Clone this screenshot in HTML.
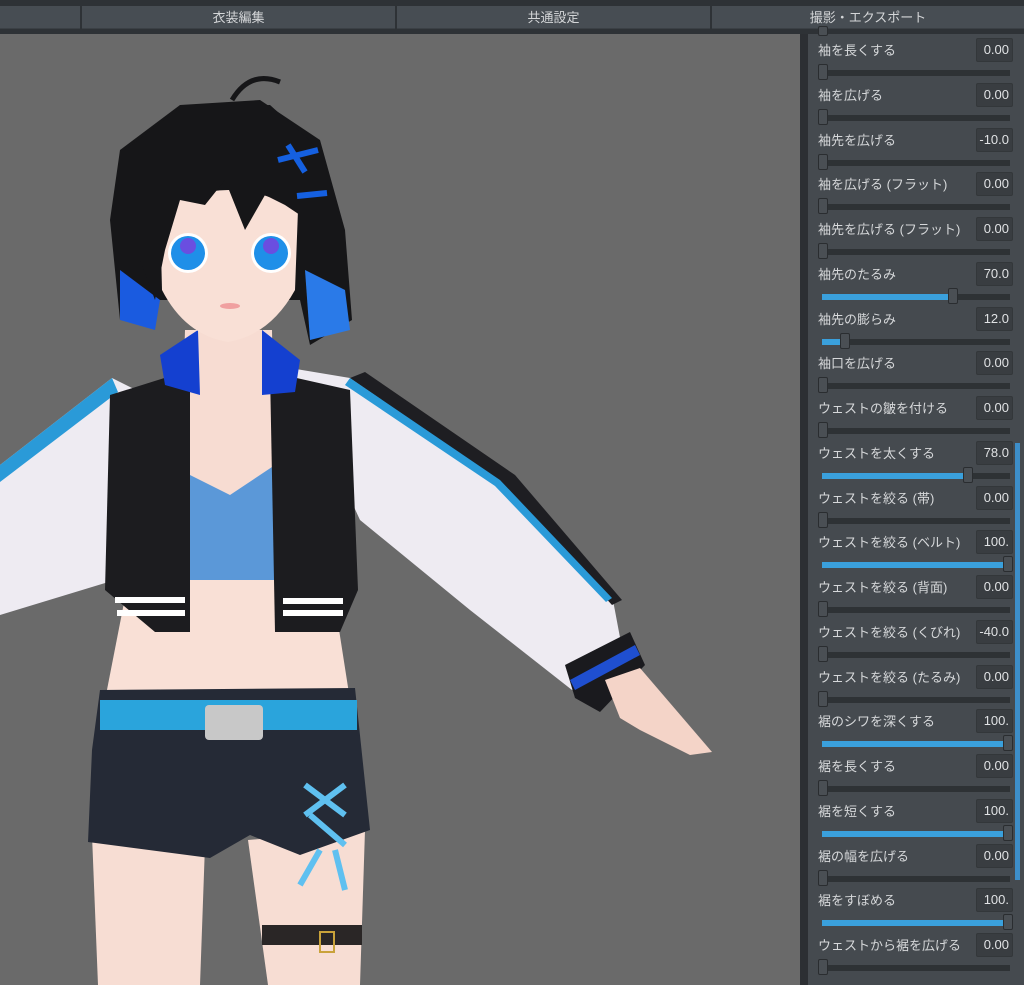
<!DOCTYPE html>
<html><head><meta charset="utf-8"><style>
*{margin:0;padding:0;box-sizing:border-box}
body{width:1024px;height:985px;overflow:hidden;background:#6a6a6a;font-family:"Liberation Sans","Noto Sans CJK JP",sans-serif;position:relative}
#top{position:absolute;left:0;top:0;width:1024px;height:34px;background:#2e3236}
.tab{position:absolute;top:6px;height:23px;background:#474d53;color:#d4d6d8;font-size:13px;line-height:23px;text-align:center;border-bottom:1px solid #3b4045}
#panel{position:absolute;left:800px;top:34px;width:224px;height:951px;background:#454a4f;border-left:8px solid #2c2f33}
.row{position:absolute;left:0;width:224px;height:44px}
.lb{position:absolute;left:818px;top:1px;height:24px;line-height:24px;font-size:13px;color:#d6d8da;white-space:nowrap}
.vb{position:absolute;left:976px;top:0;width:37px;height:24px;background:#393d41;border:1px solid #33373a;border-radius:2px;color:#e0e2e4;font-size:13px;line-height:22px;text-align:right;padding-right:3px}
.tr{position:absolute;left:822px;top:32px;width:188px;height:6px;background:#2e3235}
.fl{position:absolute;left:822px;top:32px;height:6px;background:#3aa0dc}
.hd{position:absolute;top:26px;width:10px;height:16px;background:#4a4f54;border:1px solid #2a2d30;border-radius:2px}
#sb{position:absolute;left:1015px;top:443px;width:5px;height:437px;background:#3d8ec9}
</style></head><body>
<svg width="800" height="985" style="position:absolute;left:0;top:0">
<polygon points="92,835 205,845 200,985 98,985" fill="#f7ddd3"/>
<polygon points="248,840 365,830 360,985 268,985" fill="#f7ddd3"/>
<rect x="262" y="925" width="100" height="20" fill="#2a2626"/>
<rect x="320" y="932" width="14" height="20" fill="none" stroke="#c9a23a" stroke-width="2"/>
<polygon points="130,572 330,572 350,700 105,700" fill="#f9e0d6"/>
<polygon points="100,690 355,688 370,830 300,855 250,835 210,858 88,842 92,750" fill="#252a36"/>
<rect x="100" y="700" width="257" height="30" fill="#2aa4dc"/>
<rect x="205" y="705" width="58" height="35" rx="4" fill="#c8c8c8"/>
<path d="M305,785 L345,815 M345,785 L305,815 M310,815 L345,845 M320,850 L300,885 M335,850 L345,890" stroke="#5fc0f0" stroke-width="6" fill="none"/>
<polygon points="0,465 112,378 140,392 115,580 0,615" fill="#eeebf2"/>
<polygon points="0,465 112,378 118,392 0,482" fill="#2a9ad8"/>
<polygon points="290,368 350,378 500,480 612,595 622,648 572,690 470,610 360,520" fill="#eeebf2"/>
<polygon points="350,378 365,372 515,475 622,600 612,605 500,482" fill="#1e1e22"/>
<polygon points="350,378 500,480 612,598 606,602 495,486 345,385" fill="#2a9ad8"/>
<polygon points="565,665 630,632 645,665 600,712 575,698" fill="#1a1a1e"/>
<polygon points="570,680 635,645 640,655 575,690" fill="#1f4fd0"/>
<polygon points="605,680 640,668 712,752 690,755 640,730 620,718" fill="#f4d4c8"/>
<polygon points="185,330 272,330 275,500 180,500" fill="#f7dcd2"/>
<polygon points="180,470 230,495 275,465 275,580 182,580" fill="#5b98d8"/>
<polygon points="110,395 190,370 190,632 155,632 105,590" fill="#1c1c1f"/>
<polygon points="270,372 350,390 358,590 340,632 275,632" fill="#1c1c1f"/>
<rect x="115" y="597" width="70" height="6" fill="#fff"/><rect x="117" y="610" width="68" height="6" fill="#fff"/>
<rect x="283" y="598" width="60" height="6" fill="#fff"/><rect x="283" y="610" width="60" height="6" fill="#fff"/>
<polygon points="160,355 198,330 200,395 165,385" fill="#1440d0"/>
<polygon points="262,330 300,360 295,392 262,395" fill="#1440d0"/>
<polygon points="120,150 180,105 260,100 320,140 345,230 352,320 310,345 300,300 160,300 120,320 110,220" fill="#161618"/>
<polygon points="120,270 160,300 155,330 120,320" fill="#1a5be0"/>
<polygon points="305,270 345,290 350,330 310,340" fill="#2a7ae8"/>
<path d="M160,210 Q228,170 298,210 L295,290 Q270,335 228,342 Q185,335 162,290 Z" fill="#f9e0d6"/>
<polygon points="125,150 180,108 270,105 320,150 315,250 300,215 285,205 265,195 245,230 225,180 205,205 180,200 165,250 155,300 140,260" fill="#161618"/>
<path d="M232,100 Q250,70 280,82" stroke="#161618" stroke-width="5" fill="none"/>
<path d="M278,160 L318,150 M288,145 L305,172 M297,196 L327,193" stroke="#1560e0" stroke-width="6"/>
<circle cx="188" cy="253" r="20" fill="#fff"/><circle cx="188" cy="253" r="17" fill="#1f8fe8"/><circle cx="188" cy="246" r="8" fill="#6a4ee0"/>
<circle cx="271" cy="253" r="20" fill="#fff"/><circle cx="271" cy="253" r="17" fill="#1f8fe8"/><circle cx="271" cy="246" r="8" fill="#6a4ee0"/>
<ellipse cx="230" cy="306" rx="10" ry="3" fill="#f0a0a0"/>
</svg>

<div id="top">
<div class="tab" style="left:0;width:80px"></div>
<div class="tab" style="left:82px;width:313px">衣装編集</div>
<div class="tab" style="left:397px;width:313px">共通設定</div>
<div class="tab" style="left:712px;width:312px">撮影・エクスポート</div>
</div>
<div id="panel"></div>
<div class="hd" style="left:818px;top:26px;height:10px"></div>

<div class="row" style="top:38px"><div class="lb">袖を長くする</div><div class="vb">0.00</div><div class="tr"></div><div class="hd" style="left:818px"></div></div>
<div class="row" style="top:83px"><div class="lb">袖を広げる</div><div class="vb">0.00</div><div class="tr"></div><div class="hd" style="left:818px"></div></div>
<div class="row" style="top:128px"><div class="lb">袖先を広げる</div><div class="vb">-10.0</div><div class="tr"></div><div class="hd" style="left:818px"></div></div>
<div class="row" style="top:172px"><div class="lb">袖を広げる (フラット)</div><div class="vb">0.00</div><div class="tr"></div><div class="hd" style="left:818px"></div></div>
<div class="row" style="top:217px"><div class="lb">袖先を広げる (フラット)</div><div class="vb">0.00</div><div class="tr"></div><div class="hd" style="left:818px"></div></div>
<div class="row" style="top:262px"><div class="lb">袖先のたるみ</div><div class="vb">70.0</div><div class="tr"></div><div class="fl" style="width:128px"></div><div class="hd" style="left:948px"></div></div>
<div class="row" style="top:307px"><div class="lb">袖先の膨らみ</div><div class="vb">12.0</div><div class="tr"></div><div class="fl" style="width:20px"></div><div class="hd" style="left:840px"></div></div>
<div class="row" style="top:351px"><div class="lb">袖口を広げる</div><div class="vb">0.00</div><div class="tr"></div><div class="hd" style="left:818px"></div></div>
<div class="row" style="top:396px"><div class="lb">ウェストの皺を付ける</div><div class="vb">0.00</div><div class="tr"></div><div class="hd" style="left:818px"></div></div>
<div class="row" style="top:441px"><div class="lb">ウェストを太くする</div><div class="vb">78.0</div><div class="tr"></div><div class="fl" style="width:143px"></div><div class="hd" style="left:963px"></div></div>
<div class="row" style="top:486px"><div class="lb">ウェストを絞る (帯)</div><div class="vb">0.00</div><div class="tr"></div><div class="hd" style="left:818px"></div></div>
<div class="row" style="top:530px"><div class="lb">ウェストを絞る (ベルト)</div><div class="vb">100.</div><div class="tr"></div><div class="fl" style="width:183px"></div><div class="hd" style="left:1003px"></div></div>
<div class="row" style="top:575px"><div class="lb">ウェストを絞る (背面)</div><div class="vb">0.00</div><div class="tr"></div><div class="hd" style="left:818px"></div></div>
<div class="row" style="top:620px"><div class="lb">ウェストを絞る (くびれ)</div><div class="vb">-40.0</div><div class="tr"></div><div class="hd" style="left:818px"></div></div>
<div class="row" style="top:665px"><div class="lb">ウェストを絞る (たるみ)</div><div class="vb">0.00</div><div class="tr"></div><div class="hd" style="left:818px"></div></div>
<div class="row" style="top:709px"><div class="lb">裾のシワを深くする</div><div class="vb">100.</div><div class="tr"></div><div class="fl" style="width:183px"></div><div class="hd" style="left:1003px"></div></div>
<div class="row" style="top:754px"><div class="lb">裾を長くする</div><div class="vb">0.00</div><div class="tr"></div><div class="hd" style="left:818px"></div></div>
<div class="row" style="top:799px"><div class="lb">裾を短くする</div><div class="vb">100.</div><div class="tr"></div><div class="fl" style="width:183px"></div><div class="hd" style="left:1003px"></div></div>
<div class="row" style="top:844px"><div class="lb">裾の幅を広げる</div><div class="vb">0.00</div><div class="tr"></div><div class="hd" style="left:818px"></div></div>
<div class="row" style="top:888px"><div class="lb">裾をすぼめる</div><div class="vb">100.</div><div class="tr"></div><div class="fl" style="width:183px"></div><div class="hd" style="left:1003px"></div></div>
<div class="row" style="top:933px"><div class="lb">ウェストから裾を広げる</div><div class="vb">0.00</div><div class="tr"></div><div class="hd" style="left:818px"></div></div>
<div id="sb"></div>
</body></html>
